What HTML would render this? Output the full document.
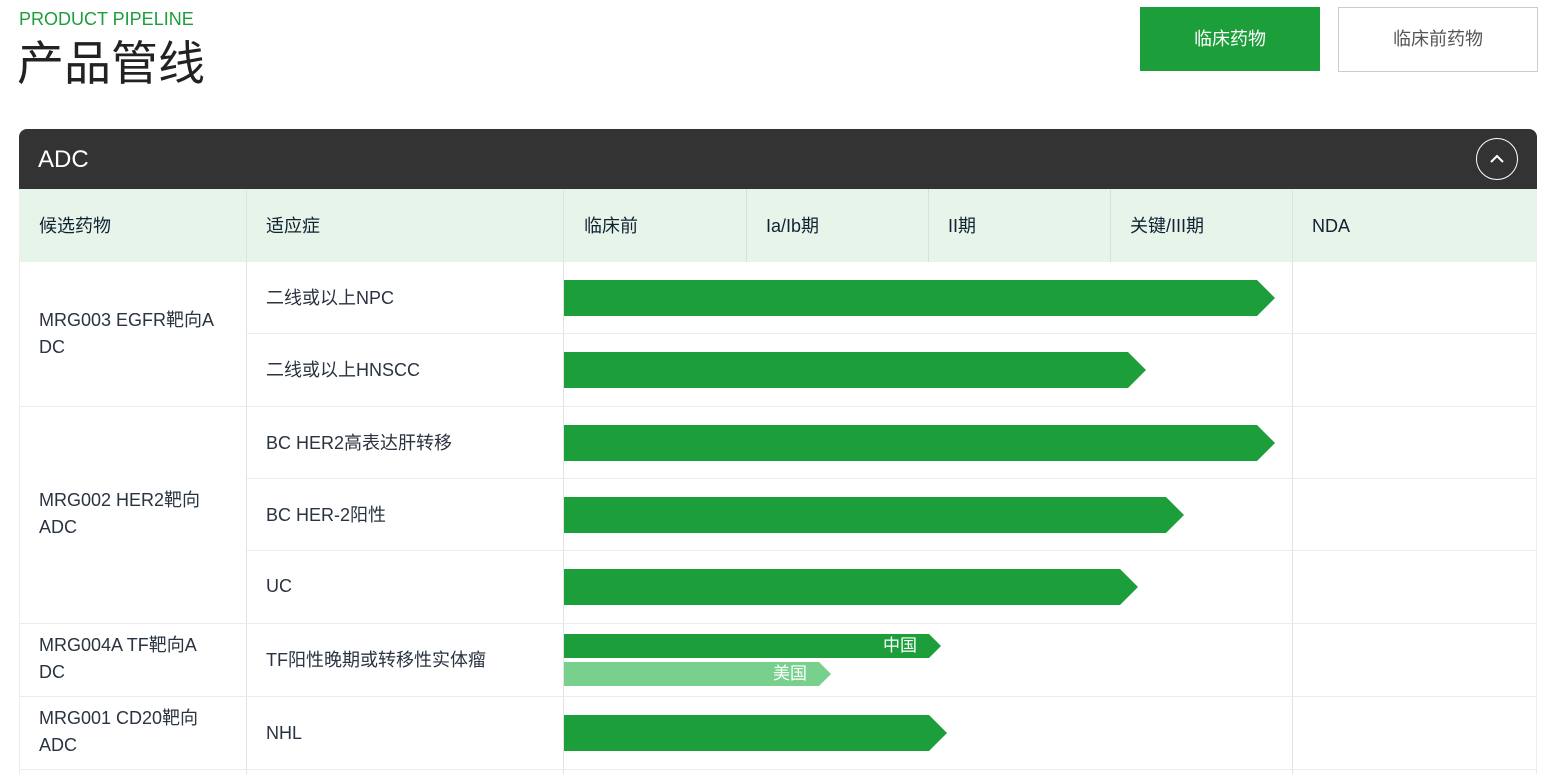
<!DOCTYPE html>
<html><head><meta charset="utf-8"><style>
*{margin:0;padding:0;box-sizing:border-box}
body{width:1554px;height:774px;overflow:hidden;background:#fff;font-family:"Liberation Sans","Noto Sans CJK SC",sans-serif;position:relative;color:#222}
.a{position:absolute}
.t{font-size:18px;color:#2a3340;line-height:24px}
.bar{position:absolute;background:#1c9e3a;clip-path:polygon(0 0,calc(100% - 18px) 0,100% 50%,calc(100% - 18px) 100%,0 100%)}
.sb{position:absolute;clip-path:polygon(0 0,calc(100% - 12px) 0,100% 50%,calc(100% - 12px) 100%,0 100%);color:#fff;font-size:17px;text-align:right;padding-right:24px;line-height:24px}
.hl{position:absolute;height:1px;background:#ececec}
.vl{position:absolute;width:1px;background:#ececec}
</style></head><body>
<div class="a" style="left:19px;top:9px;font-size:18px;color:#1c9e3a">PRODUCT PIPELINE</div>
<div class="a" style="left:17px;top:36px;font-size:47px;color:#222;line-height:56px">产品管线</div>
<div class="a" style="left:1140px;top:7px;width:180px;height:64px;background:#1c9e3a;color:#fff;font-size:18px;text-align:center;line-height:64px">临床药物</div>
<div class="a" style="left:1338px;top:7px;width:200px;height:65px;border:1px solid #ccc;color:#555;font-size:18px;text-align:center;line-height:63px">临床前药物</div>

<div class="a" style="left:19px;top:129px;width:1518px;height:60px;background:#333;border-radius:8px 8px 0 0"></div>
<div class="a" style="left:38px;top:146px;font-size:24px;color:#fff">ADC</div>
<div class="a" style="left:1476px;top:138px;width:42px;height:42px;border:1.5px solid #fff;border-radius:50%"></div>
<svg class="a" style="left:1485px;top:147px" width="24" height="24"><path d="M6 15 L12 9 L18 15" stroke="#fff" stroke-width="2" fill="none"/></svg>

<div class="a" style="left:19px;top:189px;width:1518px;height:73px;background:#e6f4ea"></div>
<div class="vl" style="left:19px;top:189px;height:585px"></div>
<div class="vl" style="left:1536px;top:189px;height:585px"></div>
<div class="vl" style="left:246px;top:189px;height:585px;background:#e2e2e2"></div>
<div class="vl" style="left:563px;top:189px;height:585px;background:#e2e2e2"></div>
<div class="vl" style="left:746px;top:189px;height:73px;background:#dcdcdc"></div>
<div class="vl" style="left:928px;top:189px;height:73px;background:#dcdcdc"></div>
<div class="vl" style="left:1110px;top:189px;height:73px;background:#dcdcdc"></div>
<div class="vl" style="left:1292px;top:189px;height:585px;background:#e2e2e2"></div>
<div class="a t" style="left:39px;top:214px;color:#123">候选药物</div>
<div class="a t" style="left:266px;top:214px;color:#123">适应症</div>
<div class="a t" style="left:584px;top:214px;color:#123">临床前</div>
<div class="a t" style="left:766px;top:214px;color:#123">Ia/Ib期</div>
<div class="a t" style="left:948px;top:214px;color:#123">II期</div>
<div class="a t" style="left:1130px;top:214px;color:#123">关键/III期</div>
<div class="a t" style="left:1312px;top:214px;color:#123">NDA</div>

<div class="hl" style="left:247px;top:333px;width:1290px"></div>
<div class="hl" style="left:19px;top:406px;width:1518px"></div>
<div class="hl" style="left:247px;top:478px;width:1290px"></div>
<div class="hl" style="left:247px;top:550px;width:1290px"></div>
<div class="hl" style="left:19px;top:623px;width:1518px"></div>
<div class="hl" style="left:19px;top:696px;width:1518px"></div>
<div class="hl" style="left:19px;top:769px;width:1518px"></div>

<div class="a t" style="left:39px;top:307px;width:190px;line-height:27px">MRG003 EGFR靶向A<br>DC</div>
<div class="a t" style="left:39px;top:487px;line-height:27px">MRG002 HER2靶向<br>ADC</div>
<div class="a t" style="left:39px;top:632px;line-height:27px">MRG004A TF靶向A<br>DC</div>
<div class="a t" style="left:39px;top:705px;line-height:27px">MRG001 CD20靶向<br>ADC</div>

<div class="a t" style="left:266px;top:286px">二线或以上NPC</div>
<div class="a t" style="left:266px;top:358px">二线或以上HNSCC</div>
<div class="a t" style="left:266px;top:431px">BC HER2高表达肝转移</div>
<div class="a t" style="left:266px;top:503px">BC HER-2阳性</div>
<div class="a t" style="left:266px;top:574px">UC</div>
<div class="a t" style="left:266px;top:648px">TF阳性晚期或转移性实体瘤</div>
<div class="a t" style="left:266px;top:721px">NHL</div>

<div class="bar" style="left:564px;top:280px;width:711px;height:36px"></div>
<div class="bar" style="left:564px;top:352px;width:582px;height:36px"></div>
<div class="bar" style="left:564px;top:425px;width:711px;height:36px"></div>
<div class="bar" style="left:564px;top:497px;width:620px;height:36px"></div>
<div class="bar" style="left:564px;top:569px;width:574px;height:36px"></div>
<div class="sb" style="left:564px;top:634px;width:377px;height:24px;background:#1c9e3a">中国</div>
<div class="sb" style="left:564px;top:662px;width:267px;height:24px;background:#77d08b">美国</div>
<div class="bar" style="left:564px;top:715px;width:383px;height:36px"></div>
</body></html>
